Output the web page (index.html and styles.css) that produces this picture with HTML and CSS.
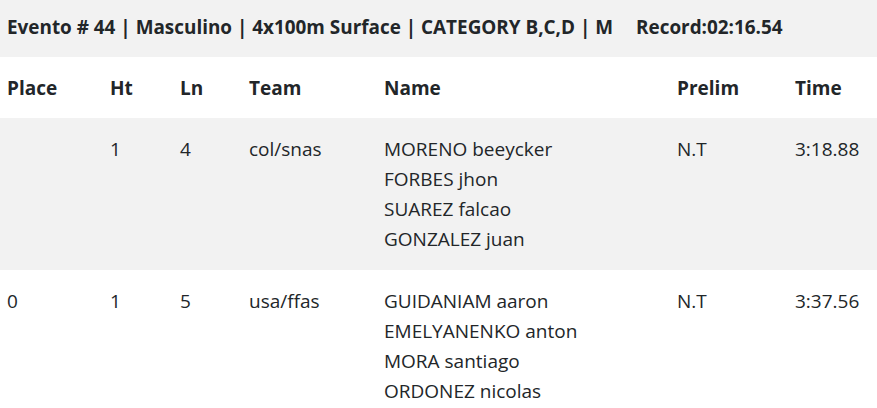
FILE: index.html
```html
<!DOCTYPE html>
<html>
<head>
<meta charset="utf-8">
<link rel="stylesheet" href="styles.css">
</head>
<body>
<div class="event-title">Evento # 44 | Masculino | 4x100m Surface | CATEGORY B,C,D | M<span class="record">Record:02:16.54</span></div>
<table class="results">
  <colgroup>
    <col class="c-place"><col class="c-ht"><col class="c-ln"><col class="c-team"><col class="c-name"><col class="c-prelim"><col class="c-time">
  </colgroup>
  <thead>
    <tr><th>Place</th><th>Ht</th><th>Ln</th><th>Team</th><th>Name</th><th>Prelim</th><th>Time</th></tr>
  </thead>
  <tbody>
    <tr class="odd">
      <td></td><td>1</td><td>4</td><td>col/snas</td>
      <td>MORENO beeycker<br>FORBES jhon<br>SUAREZ falcao<br>GONZALEZ juan</td>
      <td>N.T</td><td>3:18.88</td>
    </tr>
    <tr>
      <td>0</td><td>1</td><td>5</td><td>usa/ffas</td>
      <td>GUIDANIAM aaron<br>EMELYANENKO anton<br>MORA santiago<br>ORDONEZ nicolas</td>
      <td>N.T</td><td>3:37.56</td>
    </tr>
  </tbody>
</table>
</body>
</html>
```

FILE: styles.css
```css
html, body {
  margin: 0;
  padding: 0;
  background: #ffffff;
}
body {
  font-family: "Open Sans", "Noto Sans", sans-serif;
  font-size: 19px;
  color: #222629;
}
.event-title {
  background: #f2f2f2;
  height: 57px;
  line-height: 55px;
  padding-left: 7px;
  font-weight: 700;
  font-size: 18.9px;
  white-space: nowrap;
}
.record {
  margin-left: 23px;
}
.results {
  width: 100%;
  border-collapse: collapse;
  table-layout: fixed;
}
.c-place { width: 103px; }
.c-ht { width: 70px; }
.c-ln { width: 69px; }
.c-team { width: 135px; }
.c-name { width: 293px; }
.c-prelim { width: 118px; }
.c-time { width: 89px; }
.results th, .results td {
  text-align: left;
  vertical-align: top;
  line-height: 30px;
  padding: 16px 7px;
}
.results th {
  font-weight: 700;
  padding: 16px 7px 15px;
}
.results tr.odd td {
  background: #f2f2f2;
}
```
